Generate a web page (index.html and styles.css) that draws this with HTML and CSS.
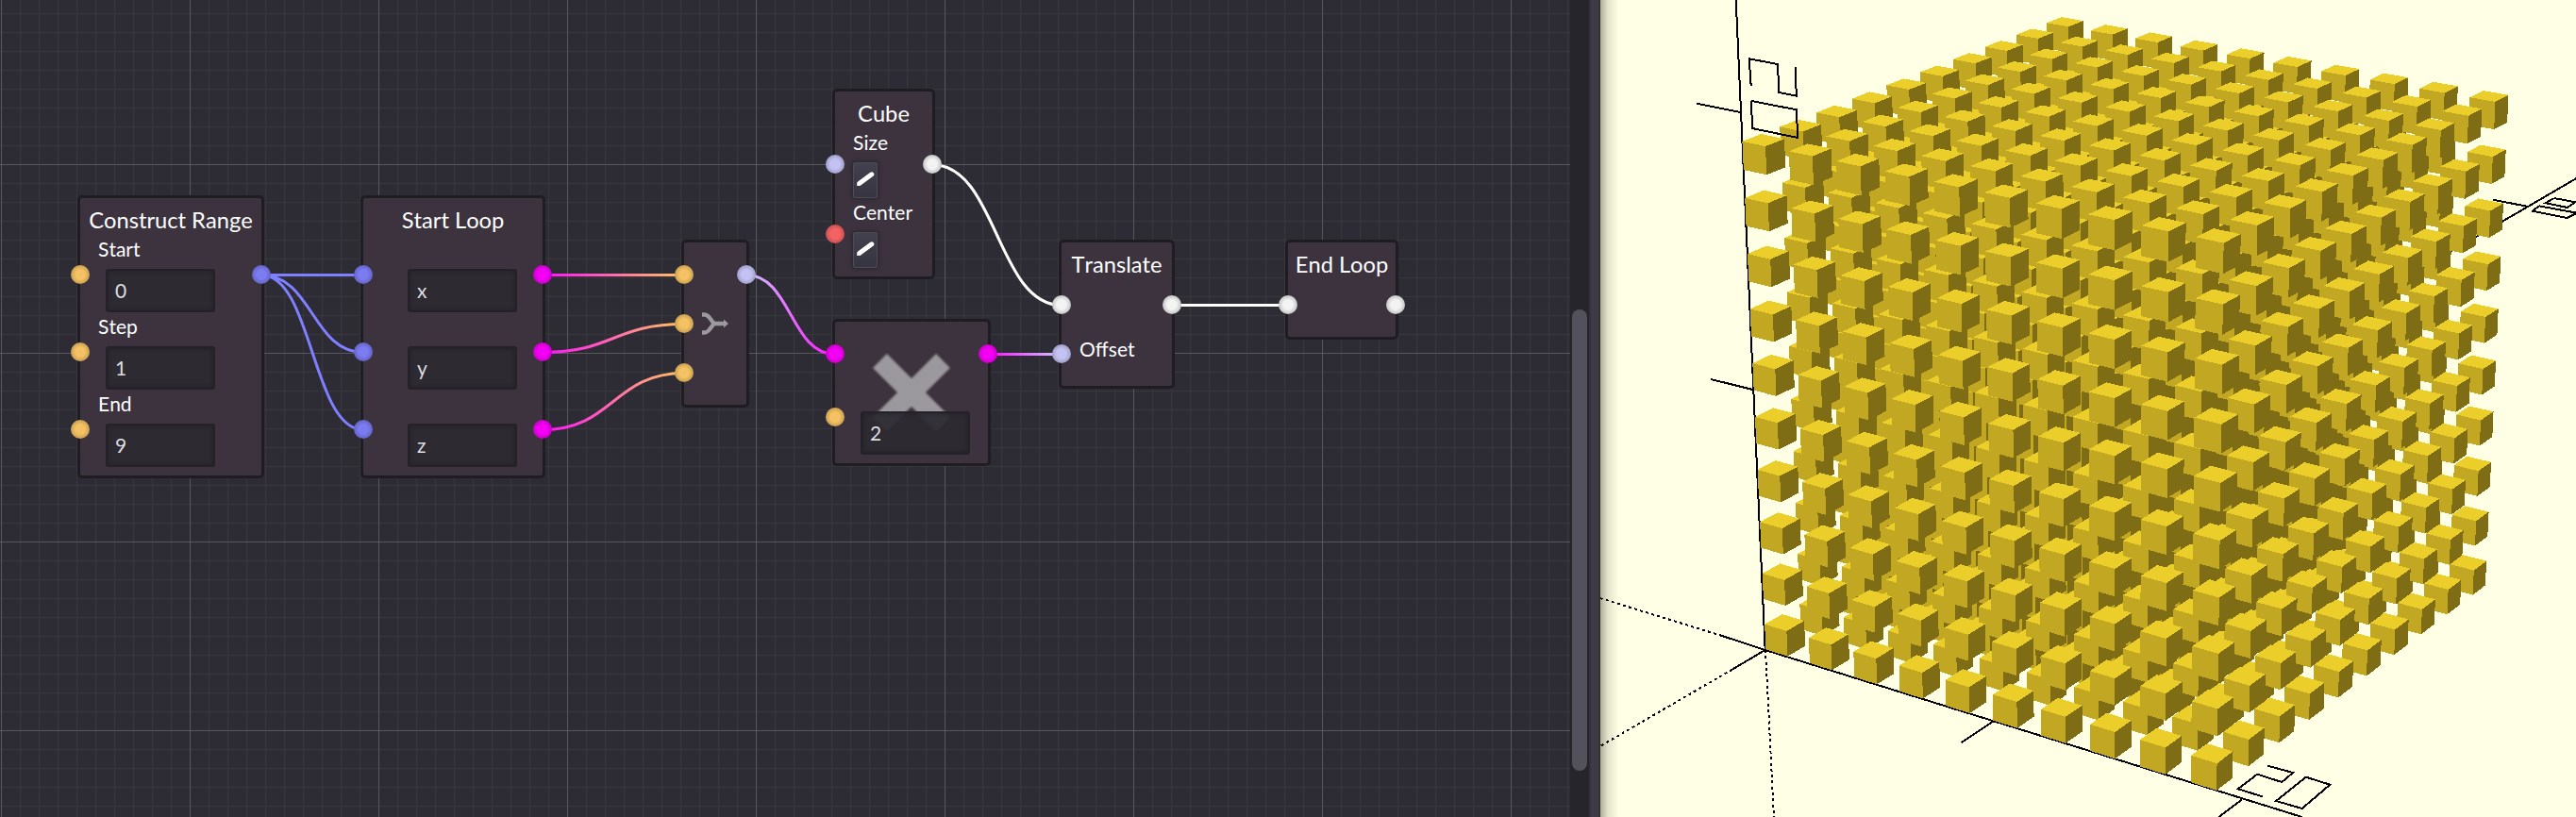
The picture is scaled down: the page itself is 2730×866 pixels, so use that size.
FILE: index.html
```html
<!DOCTYPE html>
<html lang="en">
<head>
<meta charset="utf-8">
<title>Node editor</title>
<link rel="stylesheet" href="styles.css">
</head>
<body>
<div class="app">
  <section class="editor">
    <div class="graph">
      <svg class="wires" width="1664" height="866" viewBox="0 0 1664 866">
        <defs>
          <linearGradient id="g1" gradientUnits="userSpaceOnUse" x1="575" y1="0" x2="725" y2="0"><stop offset="0" stop-color="#ff10ff"/><stop offset="1" stop-color="#ffc65c"/></linearGradient>
          <linearGradient id="g2" gradientUnits="userSpaceOnUse" x1="791" y1="0" x2="885" y2="0"><stop offset="0" stop-color="#cdc8ff"/><stop offset="1" stop-color="#ff10ff"/></linearGradient>
          <linearGradient id="g3" gradientUnits="userSpaceOnUse" x1="1047" y1="0" x2="1125" y2="0"><stop offset="0" stop-color="#ff10ff"/><stop offset="1" stop-color="#cdc8ff"/></linearGradient>
        </defs>
        <path stroke="#7f7fff" d="M277 291.5H385M277 291.5C331 291.5 331 373.5 385 373.5M277 291.5C331 291.5 331 455.5 385 455.5"/>
        <path stroke="url(#g1)" d="M575 291.5L725 291.6M575 373.5C650 373.5 650 343.5 725 343.5M575 455.5C650 455.5 650 395.5 725 395.5"/>
        <path stroke="url(#g2)" d="M791 291.5C838 291.5 838 375.5 885 375.5"/>
        <path stroke="url(#g3)" d="M1047 375.5L1125 375.6"/>
        <path stroke="#fff" d="M988 174.5C1056.5 174.5 1056.5 323.5 1125 323.5M1242 323.5H1365"/>
      </svg>

      <article class="node range">
        <h2 class="title">Construct Range</h2>
        <div class="slot tall"><i class="port in num"></i><i class="port out list"></i><span class="label">Start</span><span class="input">0</span></div>
        <div class="slot tall"><i class="port in num"></i><span class="label">Step</span><span class="input">1</span></div>
        <div class="slot tall"><i class="port in num"></i><span class="label">End</span><span class="input">9</span></div>
      </article>

      <article class="node loop">
        <h2 class="title">Start Loop</h2>
        <div class="slot tall"><i class="port in list"></i><i class="port out any"></i><span class="label"></span><span class="input">x</span></div>
        <div class="slot tall"><i class="port in list"></i><i class="port out any"></i><span class="label"></span><span class="input">y</span></div>
        <div class="slot tall"><i class="port in list"></i><i class="port out any"></i><span class="label"></span><span class="input">z</span></div>
      </article>

      <article class="node merge untitled">
        <svg class="merge-icon" width="30" height="26" viewBox="0 0 30 26"><path d="M1 3.500H3.500C9 3.500 10 10 14 13C10 16 9 22.500 3.500 22.500H1M13 13H25" fill="none" stroke="#9c999e" stroke-width="4.400"/><path d="M24 8.500L29 13L24 17.500Z" fill="#9c999e"/></svg>
        <div class="slot"><i class="port in num"></i><i class="port out vec"></i></div>
        <div class="slot"><i class="port in num"></i></div>
        <div class="slot"><i class="port in num"></i></div>
      </article>

      <article class="node multiply untitled">
        <svg class="times-icon" width="84" height="84" viewBox="0 0 84 84"><path d="M8.500 8.500L75.500 75.500M75.500 8.500L8.500 75.500" stroke="#9c999e" stroke-width="21"/></svg>
        <div class="slot"><i class="port in any"></i><i class="port out any"></i></div>
        <div class="slot tall"><i class="port in num"></i><span class="label"></span><span class="input">2</span></div>
      </article>

      <article class="node cube">
        <h2 class="title">Cube</h2>
        <div class="slot mid"><i class="port in vec"></i><i class="port out solid"></i><span class="label">Size</span>
          <button class="edit"><svg width="26" height="38" viewBox="0 0 26 38"><path d="M7 22.300L19.800 12.800" stroke="#fff" stroke-width="5" stroke-linecap="round"/><path d="M4 25L4.800 21L8 24.500Z" fill="#fff"/></svg></button></div>
        <div class="slot mid"><i class="port in bool"></i><span class="label">Center</span>
          <button class="edit"><svg width="26" height="38" viewBox="0 0 26 38"><path d="M7 22.300L19.800 12.800" stroke="#fff" stroke-width="5" stroke-linecap="round"/><path d="M4 25L4.800 21L8 24.500Z" fill="#fff"/></svg></button></div>
      </article>

      <article class="node translate">
        <h2 class="title">Translate</h2>
        <div class="slot"><i class="port in solid"></i><i class="port out solid"></i></div>
        <div class="slot"><i class="port in vec"></i><span class="label low">Offset</span></div>
      </article>

      <article class="node endloop">
        <h2 class="title">End Loop</h2>
        <div class="slot"><i class="port in solid"></i><i class="port out solid"></i></div>
      </article>
    </div>
    <div class="scrollbar"><div class="thumb"></div></div>
    <div class="frame"></div>
  </section>
  <section class="viewport"><svg id="scene" width="1034" height="866" viewBox="1696 0 1034 866" shape-rendering="crispEdges"></svg></section>
</div>
<script src="scene.js"></script>
</body>
</html>
```
FILE: scene.js
```js
// Perspective camera: world units (tens) to screen pixels.
const P = [
  [0.489806, 0.332014, -0.003096, -0.657169],
  [0.121431, -0.184544, -0.548491, 0.516836],
  [-0.043917, 0.066099, -0.032805, 1]
];

function project(x, y, z) {
  const [u, v, w] = P.map(r => (r[0] * x + r[1] * y + r[2] * z) / 10 + r[3]);
  return [2200 + 500 * u / w, 430 + 500 * v / w];
}

const line = (points, extra = '') => `<polyline class="axis ${extra}" points="${points}"/>`;
const face = (cls, ...corners) =>
  `<polygon class="${cls}" points="${corners.map(c => project(...c).map(n => n.toFixed(2)).join()).join(' ')}"/>`;

// Axes and tick marks, drawn behind the cubes.
let out = [
  line('1839.7,0 1870.7,689'),
  line('1825,674 1870.7,689 2439.7,866'),
  line('1835.7,709.7 1870.7,689 2679,219 2730,189.3'),
  line('1825,674 1694,633.5', 'dots'),
  line('1835.7,709.7 1694,792', 'dots'),
  line('1871,689 1880,866', 'dots'),
  line('1798.3,109.7 1844.7,119'),
  line('1813.3,402 1858.7,413.3'),
  line('2112.7,764.3 2078.7,787'),
  line('2376.3,847.3 2351.2,866'),
  line('2642,211.7 2679.3,219')
].join('');

// Back to front, so nearer cubes cover farther ones.
for (let k = 0; k < 10; k++)
  for (let j = 9; j >= 0; j--)
    for (let i = 0; i < 10; i++) {
      const x = 2 * i, y = 2 * j, z = 2 * k, X = x + 1, Y = y + 1, Z = z + 1;
      out += face('front', [x, y, z], [X, y, z], [X, y, Z], [x, y, Z])
        + face('side', [X, y, z], [X, Y, z], [X, Y, Z], [X, y, Z])
        + face('top', [x, y, Z], [X, y, Z], [X, Y, Z], [x, Y, Z]);
    }

// Stroke-drawn axis numerals.
out += line('1855.7,91 1853.7,62.3 1884,68 1885.3,98 1903.7,101.7 1903,71')
  + line('1856,107 1904,116.3 1905,146 1857,136 1856,107')
  + line('2403.2,811.7 2430,819 2418.3,829 2392.2,820.7 2371.8,836.3 2397.7,844.3')
  + line('2443.8,823.7 2469.3,831.7 2439.7,857 2412.1,849 2443.8,823.7')
  + line('2706.7,210 2729.3,214.3 2721,220 2697.7,215.3 2706.7,210')
  + line('2690.7,218.3 2731,225.7 2720.7,231 2684,223.7 2690.7,218.3');

document.getElementById('scene').innerHTML = out;
```
FILE: styles.css
```css
*{box-sizing:border-box}
body{margin:0;font-family:Lato,"Open Sans",sans-serif;font-kerning:none;color:#fff;background:#2d2b33}
.app{display:flex;width:2730px;height:866px;overflow:hidden}
.editor{display:flex;width:1696px;flex:none}
.graph{position:relative;width:1664px;flex:none;overflow:hidden;background-color:#2d2b33;
background-image:
linear-gradient(90deg,#59575d 1px,transparent 1px),
linear-gradient(#59575d 1px,transparent 1px),
linear-gradient(90deg,#38373b 1px,transparent 1px),
linear-gradient(#38373b 1px,transparent 1px);
background-size:200px 200px,200px 200px,20px 20px,20px 20px;
background-position:1px 0,0 174px,1px 0,0 14px}
.wires{position:absolute;left:0;top:0}
.wires path{fill:none;stroke-width:3px}
.node{position:absolute;display:flex;flex-direction:column;background:#3c333e;border:3px solid #1f1d22;border-radius:5px;padding-bottom:8px}
.untitled{padding-top:8px}
.range{left:82px;top:207px;width:198px}
.loop{left:382px;top:207px;width:196px}
.merge{left:722px;top:254px;width:72px}
.multiply{left:882px;top:338px;width:168px}
.cube{left:882px;top:94px;width:109px}
.translate{left:1122px;top:254px;width:123px}
.endloop{left:1362px;top:254px;width:120px}
.title{margin:0;height:40px;padding-top:9px;font-size:23.7px;line-height:28px;font-weight:400;text-align:center;white-space:nowrap}
.slot{position:relative;height:52px;display:flex;flex-direction:column;align-items:flex-start;padding-left:19px}
.slot.mid{height:74px}
.slot.tall{height:82px}
.label{height:35px;padding-top:1px;font-size:21px;line-height:26px}
.label.low{padding-top:8px}
.input{width:116px;height:46px;margin-left:8px;padding-left:8px;border:2px solid #242228;border-radius:3px;background:rgba(44,42,50,.93);color:#dedee0;font-size:21px;line-height:41px;box-shadow:inset 0 0 4px rgba(20,18,24,.5);position:relative}
.loop .input{margin-left:28px}
.port{position:absolute;top:50%;width:20px;height:20px;margin-top:-10px;border-radius:50%}
.in{left:-10px}
.out{right:-10px}
.num{background:radial-gradient(circle,#f5c263 35%,#c9a052 70%)}
.list{background:radial-gradient(circle,#7b7bf2 35%,#6464c4 70%)}
.any{background:radial-gradient(circle,#f400f4 35%,#c900c9 70%)}
.vec{background:radial-gradient(circle,#c3c2f3 35%,#a09fc8 70%)}
.bool{background:radial-gradient(circle,#f46264 35%,#c85154 70%)}
.solid{background:radial-gradient(circle,#f3f3f3 35%,#c5c5c5 70%)}
.edit{display:block;width:26px;height:38px;padding:0;border:0;border-radius:3px;background:linear-gradient(#42414d,#353440);box-shadow:inset 0 0 0 1px #4d4b58,0 0 4px 1px rgba(30,26,34,.6)}
.edit svg{display:block}
.merge-icon{position:absolute;left:18px;top:73px}
.times-icon{position:absolute;left:39px;top:33px;filter:blur(.8px)}
.scrollbar{width:20px;flex:none;padding:328px 2px 0;background:#26252b;box-shadow:-3px 0 #33313b}
.thumb{height:489px;border-radius:8px;background:#53515b}
.frame{width:12px;flex:none;background:linear-gradient(90deg,#33313b 2px,#3e3b47 2px 10px,#33312f 10px)}
.viewport{width:1034px;flex:none;position:relative;background:#ffffe5;overflow:hidden}
.viewport svg{display:block}
.viewport::before{content:"";position:absolute;left:0;top:0;width:20px;height:100%;background:linear-gradient(90deg,rgba(60,60,50,.42),rgba(60,60,50,.14) 40%,rgba(60,60,50,0))}
.front{fill:#c1a722}
.side{fill:#7e6d14}
.top{fill:#ecce2a}
.axis{fill:none;stroke:#000;stroke-width:2}
.dots{stroke-dasharray:3 3.3}
```
